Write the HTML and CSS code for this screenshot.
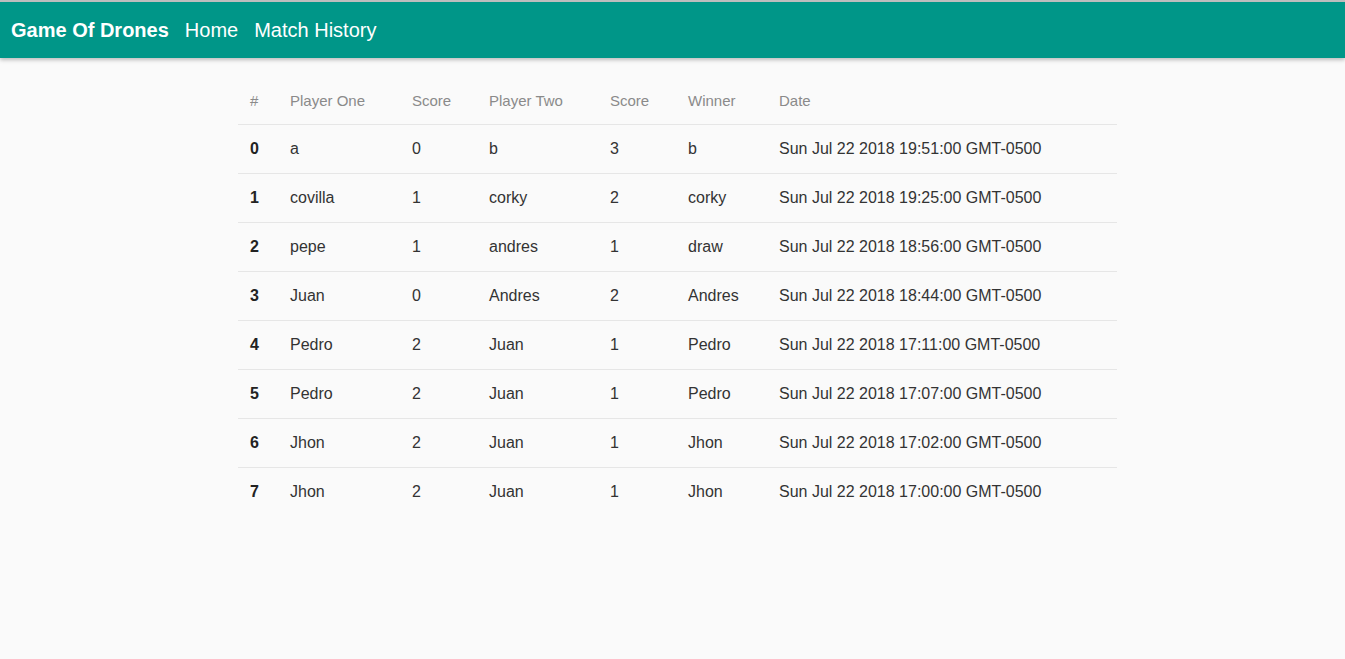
FILE: index.html
```html
<!DOCTYPE html>
<html lang="en">
<head>
<meta charset="utf-8">
<title>Game Of Drones</title>
<link rel="stylesheet" href="styles.css">
</head>
<body>
<header class="topbar">
  <span class="brand">Game Of Drones</span>
  <a class="nav-link" href="#">Home</a>
  <a class="nav-link" href="#">Match History</a>
</header>
<main class="content">
  <table class="history">
    <colgroup>
      <col class="c-idx"><col class="c-p1"><col class="c-s1"><col class="c-p2"><col class="c-s2"><col class="c-win"><col class="c-date">
    </colgroup>
    <thead>
      <tr><th>#</th><th>Player One</th><th>Score</th><th>Player Two</th><th>Score</th><th>Winner</th><th>Date</th></tr>
    </thead>
    <tbody>
      <tr><td class="idx">0</td><td>a</td><td>0</td><td>b</td><td>3</td><td>b</td><td>Sun Jul 22 2018 19:51:00 GMT-0500</td></tr>
      <tr><td class="idx">1</td><td>covilla</td><td>1</td><td>corky</td><td>2</td><td>corky</td><td>Sun Jul 22 2018 19:25:00 GMT-0500</td></tr>
      <tr><td class="idx">2</td><td>pepe</td><td>1</td><td>andres</td><td>1</td><td>draw</td><td>Sun Jul 22 2018 18:56:00 GMT-0500</td></tr>
      <tr><td class="idx">3</td><td>Juan</td><td>0</td><td>Andres</td><td>2</td><td>Andres</td><td>Sun Jul 22 2018 18:44:00 GMT-0500</td></tr>
      <tr><td class="idx">4</td><td>Pedro</td><td>2</td><td>Juan</td><td>1</td><td>Pedro</td><td>Sun Jul 22 2018 17:11:00 GMT-0500</td></tr>
      <tr><td class="idx">5</td><td>Pedro</td><td>2</td><td>Juan</td><td>1</td><td>Pedro</td><td>Sun Jul 22 2018 17:07:00 GMT-0500</td></tr>
      <tr><td class="idx">6</td><td>Jhon</td><td>2</td><td>Juan</td><td>1</td><td>Jhon</td><td>Sun Jul 22 2018 17:02:00 GMT-0500</td></tr>
      <tr class="last"><td class="idx">7</td><td>Jhon</td><td>2</td><td>Juan</td><td>1</td><td>Jhon</td><td>Sun Jul 22 2018 17:00:00 GMT-0500</td></tr>
    </tbody>
  </table>
</main>
</body>
</html>
```
FILE: styles.css
```css
html, body {
  margin: 0;
  padding: 0;
  background: #fafafa;
  height: 100%;
}
body {
  font-family: "Liberation Sans", Arial, sans-serif;
}
.topbar {
  display: flex;
  align-items: center;
  height: 56px;
  margin-top: 2px;
  padding: 0 11px;
  gap: 16px;
  background: #009688;
  box-shadow: 0 -2px 0 #bdbdbd, 0 2px 4px rgba(0,0,0,0.25);
  font-size: 20px;
  color: #fff;
}
.brand {
  font-weight: bold;
}
.nav-link {
  color: #fff;
  text-decoration: none;
}
.content {
  padding: 19px 228px 0 238px;
}
.history {
  width: 879px;
  border-collapse: collapse;
  table-layout: fixed;
  font-size: 16px;
}
.c-idx { width: 40px; }
.c-p1 { width: 122px; }
.c-s1 { width: 77px; }
.c-p2 { width: 121px; }
.c-s2 { width: 78px; }
.c-win { width: 91px; }
.c-date { width: 350px; }
.history th {
  text-align: left;
  font-weight: 400;
  font-size: 15px;
  color: #8a8a8a;
  height: 47px;
  padding: 0 0 0 12px;
  border-bottom: 1px solid #e6e6e6;
}
.history td {
  height: 48px;
  padding: 0 0 0 12px;
  color: #333;
  border-bottom: 1px solid #e6e6e6;
}
.history tr.last td {
  border-bottom: 0;
}
.history td.idx {
  font-weight: 700;
  color: #222;
}
```
